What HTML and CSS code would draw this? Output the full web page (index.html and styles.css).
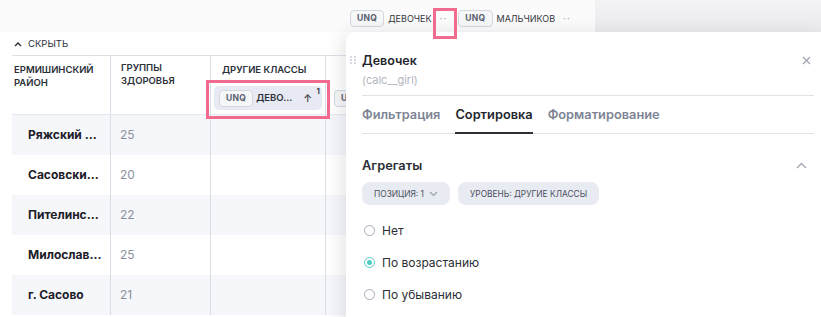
FILE: index.html
```html
<!DOCTYPE html>
<html lang="ru">

<head>
    <meta charset="UTF-8">
    <title>pivot sort</title>
    <link rel="stylesheet" href="styles.css">
</head>

<body>
    <div class="topbar">
        <div class="measures">
            <div class="measure">
                <span class="unq">UNQ</span>
                <span class="measure-name">Девочек</span>
                <span class="dots">··</span>
            </div>
            <div class="measure">
                <span class="unq">UNQ</span>
                <span class="measure-name">Мальчиков</span>
                <span class="dots">··</span>
            </div>
        </div>
        <div class="toolbar"></div>
    </div>

    <div class="hide-row">
        <svg width="8" height="6" viewBox="0 0 8 6"><path d="M1 5 L4 2 L7 5" fill="none" stroke="#2b2f38" stroke-width="1.4"/></svg>
        <span>Скрыть</span>
    </div>

    <div class="table">
        <div class="row head">
            <div class="cell c1">Ермишинский район</div>
            <div class="cell c2">Группы здоровья</div>
            <div class="cell c3">
                <div class="group-title">Другие классы</div>
                <div class="col-chip">
                    <span class="unq">UNQ</span>
                    <span class="chip-name">Дево...</span>
                    <span class="sort-arrow">&#8593;</span>
                    <sup class="sort-num">1</sup>
                </div>
            </div>
            <div class="cell c4">
                <div class="group-title">&nbsp;</div>
                <div class="col-chip short"><span class="unq">UNQ</span></div>
            </div>
        </div>
        <div class="row odd">
            <div class="cell c1 name">Ряжский ...</div>
            <div class="cell c2 val">25</div>
            <div class="cell c3"></div>
            <div class="cell c4"></div>
        </div>
        <div class="row">
            <div class="cell c1 name">Сасовски...</div>
            <div class="cell c2 val">20</div>
            <div class="cell c3"></div>
            <div class="cell c4"></div>
        </div>
        <div class="row odd">
            <div class="cell c1 name">Пителинс...</div>
            <div class="cell c2 val">22</div>
            <div class="cell c3"></div>
            <div class="cell c4"></div>
        </div>
        <div class="row">
            <div class="cell c1 name">Милослав...</div>
            <div class="cell c2 val">25</div>
            <div class="cell c3"></div>
            <div class="cell c4"></div>
        </div>
        <div class="row odd">
            <div class="cell c1 name">г. Сасово</div>
            <div class="cell c2 val">21</div>
            <div class="cell c3"></div>
            <div class="cell c4"></div>
        </div>
    </div>

    <!-- annotation boxes -->
    <div class="mark mark-dots"></div>
    <div class="mark mark-chip"></div>

    <div class="popup">
        <div class="popup-head">
            <svg class="grip" width="6" height="8" viewBox="0 0 6 8"><g fill="#c4c8d2"><circle cx="1" cy="1" r="0.9"/><circle cx="5" cy="1" r="0.9"/><circle cx="1" cy="4" r="0.9"/><circle cx="5" cy="4" r="0.9"/><circle cx="1" cy="7" r="0.9"/><circle cx="5" cy="7" r="0.9"/></g></svg>
            <div class="popup-title">Девочек</div>
            <svg class="close" width="9" height="9" viewBox="0 0 9 9"><path d="M1 1 L8 8 M8 1 L1 8" stroke="#a3a8b5" stroke-width="1.4"/></svg>
        </div>
        <div class="popup-sub">(calc__girl)</div>
        <div class="tabs">
            <div class="tab">Фильтрация</div>
            <div class="tab active">Сортировка</div>
            <div class="tab">Форматирование</div>
        </div>

        <div class="section-head">
            <div class="section-title">Агрегаты</div>
            <svg width="11" height="7" viewBox="0 0 11 7"><path d="M1 6 L5.5 1.5 L10 6" fill="none" stroke="#a3a8b5" stroke-width="1.4"/></svg>
        </div>
        <div class="chips">
            <div class="chip">Позиция: 1
                <svg width="9" height="6" viewBox="0 0 9 6"><path d="M1 1 L4.5 4.5 L8 1" fill="none" stroke="#9aa0ad" stroke-width="1.2"/></svg>
            </div>
            <div class="chip">Уровень: другие классы</div>
        </div>
        <div class="radios">
            <label class="radio"><span class="dot"></span>Нет</label>
            <label class="radio on"><span class="dot"></span>По возрастанию</label>
            <label class="radio"><span class="dot"></span>По убыванию</label>
        </div>
    </div>
</body>

</html>
```

FILE: styles.css
```css
body {
    margin: 0;
    padding: 0;
    width: 821px;
    height: 317px;
    overflow: hidden;
    position: relative;
    background-color: #ffffff;
    font-family: Inter, "Noto Sans", sans-serif;
    color: #23262e;
}

.topbar {
    height: 32px;
    display: flex;
}

.measures {
    flex: 1;
    display: flex;
    align-items: center;
    padding-left: 350px;
    gap: 11px;
    padding-top: 4px;
    box-sizing: border-box;
    background-color: #fbfbfc;
}

.measure {
    display: flex;
    align-items: center;
}

.unq {
    display: inline-block;
    border: 1px solid #d3d7df;
    border-radius: 4px;
    background-color: #f6f7f9;
    color: #5b6170;
    font-size: 8.5px;
    font-weight: 700;
    letter-spacing: 0.3px;
    padding: 2px 6px;
    line-height: 11px;
}

.measure-name {
    font-size: 9px;
    text-transform: uppercase;
    margin-left: 4px;
    color: #333740;
}

.dots {
    color: #a3a8b5;
    font-size: 10px;
    margin-left: 8px;
    letter-spacing: 1px;
}

.toolbar {
    width: 226px;
    background: linear-gradient(#f3f3f6, #ebebef);
}

.hide-row {
    display: flex;
    align-items: center;
    gap: 6px;
    padding-left: 14px;
    height: 23px;
    font-size: 9.5px;
    text-transform: uppercase;
    color: #2b2f38;
}

.table {
    margin-left: 12px;
    border-top: 1px solid #dde0e7;
}

.row {
    display: flex;
    height: 40px;
}

.row.head {
    height: 58px;
    border-bottom: 1px solid #e4e7ed;
}

.row.odd {
    background-color: #f6f7fb;
}

.cell {
    box-sizing: border-box;
    border-right: 1px solid #dbdee6;
}

.c1 {
    width: 99px;
}

.c2 {
    width: 100px;
}

.c3 {
    width: 115px;
}

.c4 {
    flex: 1;
    border-right: none;
}

.head .cell {
    font-size: 9.5px;
    font-weight: 600;
    text-transform: uppercase;
    line-height: 12.5px;
    color: #2b2f38;
}

.head .c1 {
    padding: 8px 2px 0;
}

.head .c2 {
    padding: 6px 10px 0;
}

.head .c3,
.head .c4 {
    padding: 8px 3px 0;
}

.group-title {
    padding-left: 8px;
    height: 22px;
}

.col-chip {
    display: flex;
    align-items: center;
    height: 24px;
    border-radius: 5px;
    background-color: #e7eaf2;
    padding-left: 5px;
    position: relative;
}

.col-chip.short {
    width: 40px;
    background-color: transparent;
}

.chip-name {
    margin-left: 3px;
    font-size: 9.5px;
    font-weight: 600;
}

.sort-arrow {
    margin-left: auto;
    margin-right: 10px;
    font-size: 10px;
    color: #444;
}

.sort-num {
    position: absolute;
    right: 2px;
    top: -1px;
    font-size: 8px;
}

.name {
    padding-left: 16px;
    font-size: 12px;
    font-weight: 700;
    line-height: 40px;
    color: #1d2028;
}

.val {
    padding-left: 9px;
    font-size: 12px;
    line-height: 40px;
    color: #8b909c;
}

.mark {
    position: absolute;
    border: 3px solid #f06b8e;
    box-sizing: border-box;
    z-index: 5;
}

.mark-dots {
    left: 433px;
    top: 8px;
    width: 24px;
    height: 31px;
}

.mark-chip {
    left: 206px;
    top: 80px;
    width: 124px;
    height: 39px;
}

.popup {
    position: absolute;
    left: 346px;
    top: 32px;
    width: 480px;
    height: 300px;
    background-color: #ffffff;
    border-radius: 9px 0 0 0;
    box-shadow: -4px 2px 18px rgba(40, 45, 60, 0.12);
    padding: 18px 12px 0 16px;
    box-sizing: border-box;
}

.popup-head {
    display: flex;
    align-items: center;
    position: relative;
    height: 20px;
}

.grip {
    position: absolute;
    left: -12px;
    top: 6px;
}

.popup-title {
    font-size: 12.5px;
    font-weight: 600;
    flex: 1;
}

.close {
    margin-right: 3px;
}

.popup-sub {
    font-size: 11px;
    color: #b2b6c1;
    margin-top: 3px;
    padding-bottom: 8px;
    border-bottom: 1px solid #dfe2e8;
}

.tabs {
    display: flex;
    gap: 15px;
    border-bottom: 1px solid #dfe2e8;
}

.tab {
    font-size: 12.8px;
    font-weight: 600;
    color: #7e8494;
    padding: 11px 0 10px;
    border-bottom: 2px solid transparent;
    margin-bottom: -1px;
}

.tab.active {
    color: #23262e;
    border-bottom-color: #2c2f36;
}

.section-head {
    display: flex;
    justify-content: space-between;
    align-items: center;
    margin-top: 24px;
    padding-right: 7px;
}

.section-title {
    font-size: 12.8px;
    font-weight: 600;
    color: #2b2e36;
}

.chips {
    display: flex;
    gap: 8px;
    margin-top: 9px;
}

.chip {
    display: flex;
    align-items: center;
    gap: 5px;
    height: 23px;
    padding: 0 12px;
    border-radius: 8px;
    background-color: #e8ebf2;
    font-size: 8.4px;
    text-transform: uppercase;
    color: #4a4f5c;
}

.radios {
    margin-top: 9px;
}

.radio {
    display: flex;
    align-items: center;
    height: 32px;
    font-size: 12px;
    color: #2b2e36;
}

.dot {
    width: 11px;
    height: 11px;
    border: 1px solid #a7acb9;
    border-radius: 50%;
    box-sizing: border-box;
    margin: 0 7px 0 2px;
    position: relative;
}

.radio.on .dot {
    border-color: #56cfc8;
}

.radio.on .dot::after {
    content: "";
    position: absolute;
    left: 2px;
    top: 2px;
    width: 5px;
    height: 5px;
    border-radius: 50%;
    background-color: #4ecbc3;
}
```
